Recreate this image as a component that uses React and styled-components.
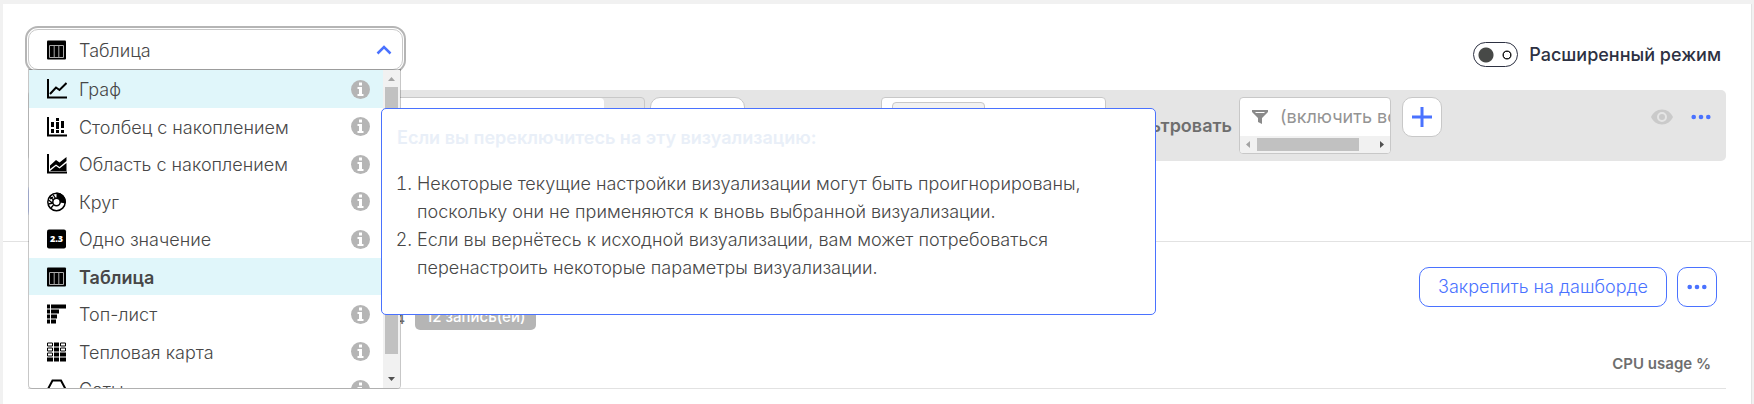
import React, { useState } from "react";
import styled, { createGlobalStyle } from "styled-components";

const GlobalStyle = createGlobalStyle`
  :root {
    --brand: #4a72ff;
    --text: #474747;
    --muted: #b5b5b5;
    --line: #e2e2e2;
  }

  * {
    box-sizing: border-box;
  }

  body {
    margin: 0;
    background: #f1f1f1;
    color: var(--text);
    font-family: Inter, "Noto Sans", sans-serif;
    font-size: 18px;
    font-weight: 300;
    line-height: 28px;
  }

  button,
  input {
    margin: 0;
    font: inherit;
    color: inherit;
  }

  button {
    cursor: pointer;
  }
`;

const Page = styled.main`
  min-height: 100vh;
  padding: 4px 2px 0 3px;
  overflow: hidden;
`;

const Panel = styled.div`
  min-height: 400px;
  background: #fff;
  border-right: 1px solid var(--line);
`;

const Editor = styled.section`
  height: 238px;
  padding: 25px 25px 0;
  border-bottom: 1px solid var(--line);
`;

const Header = styled.div`
  display: flex;
  justify-content: space-between;
  height: 61px;
`;

const Picker = styled.div`
  position: relative;
  width: 375px;
`;

const Trigger = styled.button`
  display: flex;
  align-items: center;
  gap: 12px;
  width: 100%;
  height: 41px;
  padding: 0 10px 0 18px;
  background: #fff;
  border: 1px solid #c8c8c8;
  border-radius: 10px;
  outline: 2px solid var(--muted);
  outline-offset: 1px;
  text-align: left;
`;

const Label = styled.span`
  flex: 1;
  padding-top: 2px;
  white-space: nowrap;
`;

const Menu = styled.div`
  position: absolute;
  z-index: 2;
  top: 40px;
  left: 0;
  display: flex;
  width: 373px;
  height: 320px;
  background: #fff;
  background-clip: padding-box;
  border: 1px solid rgba(0, 0, 0, 0.22);
  border-radius: 0 0 4px 4px;
  overflow: hidden;
`;

const Options = styled.ul`
  flex: 1;
  display: grid;
  grid-auto-rows: 38px 37px;
  margin: 0;
  padding: 0;
  list-style: none;
`;

const Option = styled.li`
  display: flex;
  align-items: center;
  gap: 12px;
  padding: 0 13px 0 18px;
  background: ${(props) => (props.$active ? "#e0f6fa" : "transparent")};
  font-weight: ${(props) => (props.$selected ? 600 : 300)};
`;

const Track = styled.div`
  display: flex;
  flex-direction: ${(props) => (props.$horizontal ? "row" : "column")};
  flex: 0 0 17px;
  align-items: center;
  background: #f1f1f1;
`;

const Thumb = styled.div`
  flex: 0 0 ${(props) => props.$size}px;
  align-self: stretch;
  margin: ${(props) => (props.$horizontal ? "2px 0" : "0 2px")};
  background: #c1c1c1;
`;

const Arrow = styled.svg`
  flex: 0 0 17px;
  width: 17px;
  height: 17px;
  fill: ${(props) => (props.$off ? "#a3a3a3" : "#505050")};

  &:last-child {
    margin-top: ${(props) => (props.$horizontal ? 0 : "auto")};
    margin-left: ${(props) => (props.$horizontal ? "auto" : 0)};
  }
`;

const Notice = styled.div`
  position: absolute;
  z-index: 3;
  top: 79px;
  left: 353px;
  width: 775px;
  height: 207px;
  padding: 15px;
  background: #fff;
  border: 1px solid var(--brand);
  border-radius: 5px;

  strong {
    display: block;
    color: #e9eff8;
    font-weight: 600;
  }

  ol {
    margin: 18px 0 0;
    padding: 0 0 0 20px;
  }

  li {
    max-width: 680px;
  }
`;

const Mode = styled.label`
  display: flex;
  align-items: center;
  align-self: flex-start;
  gap: 11px;
  height: 25px;
  margin: 13px 5px 0 0;
  color: #2d3142;
  font-weight: 500;
  cursor: pointer;
`;

const Switch = styled.input`
  appearance: none;
  width: 45px;
  height: 25px;
  border: 1px solid #2d3142;
  border-radius: 13px;
  background: radial-gradient(circle at 12px 12px, #474947 7px, transparent 8px),
    radial-gradient(
      circle at 33px 12px,
      transparent 3px,
      #222 3px,
      #222 4px,
      transparent 5px
    );
`;

const QueryBar = styled.div`
  display: flex;
  align-items: flex-start;
  height: 71px;
  padding: 7px 15px 7px 124px;
  background: #e5e5e5;
  border-radius: 5px;
`;

const Source = styled.div`
  display: flex;
  flex: 0 0 493px;
  height: 40px;
  margin-right: 5px;
  border: 1px solid #c8c8c8;
  border-radius: 4px;
  overflow: hidden;
`;

const SourceInput = styled.input`
  flex: 1;
  border: 0;
  border-radius: 4px;
  background: #fff;
`;

const SourceSide = styled.div`
  width: 40px;
`;

const Rounded = styled.button`
  display: flex;
  align-items: center;
  justify-content: center;
  flex: 0 0 ${(props) => props.$width || 40}px;
  height: 40px;
  padding: 0;
  background: #fff;
  border: 1px solid ${(props) => (props.$brand ? "var(--brand)" : "#c8c8c8")};
  border-radius: 10px;
  color: var(--brand);
`;

const Tags = styled.div`
  flex: 0 0 225px;
  height: 40px;
  margin-left: 136px;
  padding: 4px 10px;
  background: #fff;
  border: 1px solid #c8c8c8;
  border-radius: 4px;
`;

const Tag = styled.div`
  width: 93px;
  height: 30px;
  background: #f1f1f1;
  border: 1px solid #c8c8c8;
  border-radius: 4px;
`;

const FilterLabel = styled.label`
  flex: 0 0 133px;
  padding: 15px 7px 0 0;
  color: #6e6e6e;
  font-weight: 600;
  text-align: right;
`;

const Filter = styled.div`
  display: flex;
  flex-direction: column;
  flex: 0 0 152px;
  height: 57px;
  margin-right: 11px;
  background: #fff;
  border: 1px solid #c8c8c8;
  border-radius: 4px;
  overflow: hidden;
`;

const FilterField = styled.div`
  display: flex;
  align-items: center;
  flex: 1;
  gap: 12px;
  padding-left: 12px;
  color: #8a8a8a;
`;

const FilterInput = styled.input`
  flex: 1;
  min-width: 0;
  padding: 0;
  border: 0;
  background: none;
  font-weight: 400;

  &::placeholder {
    color: #949494;
    opacity: 1;
  }
`;

const BarActions = styled.div`
  display: flex;
  align-items: center;
  gap: 18px;
  height: 40px;
  margin-left: auto;
`;

const IconButton = styled.button`
  display: flex;
  padding: 0;
  border: 0;
  background: none;
  color: ${(props) => (props.$off ? "#cacaca" : "var(--brand)")};
`;

const AddQuery = styled(Rounded)`
  width: 130px;
  margin-top: 20px;
  border-color: #c8d4ff;
`;

const Results = styled.section`
  padding: 25px 25px 0;
`;

const Actions = styled.div`
  display: flex;
  justify-content: flex-end;
  gap: 10px;
  padding-right: 9px;
`;

const Summary = styled.div`
  display: flex;
  align-items: center;
  gap: 10px;
  height: 23px;
  color: #6e6e6e;
  font-size: 15px;
  font-weight: 500;
`;

const Count = styled.span`
  width: 377px;
  text-align: right;
`;

const Badge = styled.span`
  padding: 0 11px 3px;
  background: var(--muted);
  border-radius: 5px;
  color: #fff;
  line-height: 20px;
`;

const Table = styled.table`
  width: 100%;
  border-collapse: collapse;

  th {
    height: 58px;
    padding: 10px 15px 0 0;
    border-bottom: 1px solid var(--line);
    color: #6e6e6e;
    font-size: 15px;
    font-weight: 600;
    text-align: right;
  }
`;

const Glyph = ({ children }) => (
  <svg width="20" height="20" viewBox="0 0 20 20" aria-hidden="true">
    {children}
  </svg>
);

const Axes = () => (
  <path d="M1 0v18.500h19" fill="none" stroke="#000" strokeWidth="2" />
);

const GraphIcon = () => (
  <Glyph>
    <Axes />
    <path
      d="M3 15 9 8.500l3.500 2.500L19.500 4"
      fill="none"
      stroke="#000"
      strokeWidth="2"
    />
  </Glyph>
);

const BarsIcon = () => (
  <Glyph>
    <Axes />
    <path d="M4 5h3v5H4zM4 12h3v4H4zM9 1h3v3H9zM9 5h3v7H9zM9 13h3v3H9zM14 4h3v7h-3zM14 13h3v3h-3z" />
  </Glyph>
);

const AreaIcon = () => (
  <Glyph>
    <Axes />
    <path d="M3 11.500 9 6l3.500 2.500L19.500 3v4l-7 6L9 10.500 3 15zM3 17l6-5 3.500 2.500L19.500 9v8z" />
  </Glyph>
);

const PieIcon = () => (
  <Glyph>
    <circle cx="9.500" cy="10" r="8.700" fill="#fff" stroke="#000" strokeWidth="1.500" />
    <path d="M9.500.5a9.500 9.500 0 0 1 9.300 11L13 10.500a3.500 3.500 0 0 0-3.500-4z" />
    <circle cx="9.500" cy="10" r="3.700" fill="#fff" stroke="#000" strokeWidth="1.500" />
    <path
      d="M1.500 8l4 3M3 4.500l3.500 3.500M6 2.500l2.500 4M1.500 12l4.500-1M4 16l2.500-3M3 7l3-2"
      stroke="#000"
      strokeWidth="1.300"
    />
  </Glyph>
);

const ValueIcon = () => (
  <Glyph>
    <rect y="0.500" width="19" height="19" rx="2" />
    <text
      x="9.500"
      y="13"
      fill="#fff"
      fontFamily="Open Sans, sans-serif"
      fontSize="9"
      fontWeight="800"
      textAnchor="middle"
    >
      2.3
    </text>
  </Glyph>
);

const TableIcon = () => (
  <Glyph>
    <rect y="0.500" width="19" height="19" rx="1" />
    <path
      d="M2.500 5.500h14v12h-14zM7.200 5.500v12M11.800 5.500v12"
      fill="none"
      stroke="#aaa"
    />
  </Glyph>
);

const TopListIcon = () => (
  <Glyph>
    <path d="M0 .5h3v4H0zM4 .5h15v4H4zM0 5.500h3v4H0zM4 5.500h8v4H4zM0 10.500h3v4H0zM4 10.500h6v4H4zM0 15.500h3v4H0zM4 15.500h5v4H4z" />
  </Glyph>
);

const HeatIcon = () => (
  <Glyph>
    <path d="M7 .5h5v4H7zM7 5.500h5v4H7zM7 10.500h5v4H7zM13 10.500h6v4h-6zM0 15.500h6v4H0zM7 15.500h5v4H7zM13 15.500h6v4h-6z" />
    <path
      d="M.5 1h5v3h-5zM.5 6h5v3h-5zM.5 11h5v3h-5zM13.500 1h5v3h-5zM13.500 6h5v3h-5z"
      fill="#fff"
      stroke="#000"
    />
  </Glyph>
);

const HiveIcon = () => (
  <Glyph>
    <path
      d="M5.500 1.500h8.500l4.500 8.500-4.500 8.500H5.500L1 10z"
      fill="none"
      stroke="#000"
      strokeWidth="2"
    />
  </Glyph>
);

const InfoIcon = () => (
  <svg width="19" height="19" viewBox="0 0 19 19" aria-hidden="true">
    <circle cx="9.500" cy="9.500" r="9.500" fill="#b5b5b5" />
    <path
      d="M8 2.500h3v3H8zM6.500 7H11v7h1.500v2h-6v-2H8V9H6.500z"
      fill="#fff"
    />
  </svg>
);

const DotsIcon = () => (
  <svg width="20" height="6" viewBox="0 0 20 6" fill="currentColor">
    <circle cx="2.700" cy="3" r="2.300" />
    <circle cx="10" cy="3" r="2.300" />
    <circle cx="17.300" cy="3" r="2.300" />
  </svg>
);

const EyeIcon = () => (
  <svg width="22" height="16" viewBox="0 0 22 16" fill="currentColor">
    <path
      fillRule="evenodd"
      d="M11 .5C6 .5 2 3.500 0 8c2 4.500 6 7.500 11 7.500S20 12.500 22 8C20 3.500 16 .5 11 .5zM11 13a5 5 0 1 1 0-10 5 5 0 0 1 0 10z"
    />
    <circle cx="11" cy="8" r="3" />
  </svg>
);

const charts = [
  { name: "Граф", Icon: GraphIcon },
  { name: "Столбец с накоплением", Icon: BarsIcon },
  { name: "Область с накоплением", Icon: AreaIcon },
  { name: "Круг", Icon: PieIcon },
  { name: "Одно значение", Icon: ValueIcon },
  { name: "Таблица", Icon: TableIcon },
  { name: "Топ-лист", Icon: TopListIcon },
  { name: "Тепловая карта", Icon: HeatIcon },
  { name: "Соты", Icon: HiveIcon },
];

const VisualizationPicker = () => {
  const [selected, setSelected] = useState("Таблица");
  const [hovered, setHovered] = useState("Граф");
  const { Icon: SelectedIcon } = charts.find((c) => c.name === selected);

  return (
    <Picker>
      <Trigger type="button" aria-haspopup="listbox" aria-expanded="true">
        <SelectedIcon />
        <Label>{selected}</Label>
        <svg width="16" height="10" viewBox="0 0 16 10" aria-hidden="true">
          <path
            d="M1.500 8.500 8 2l6.500 6.500"
            fill="none"
            stroke="#4a72ff"
            strokeWidth="2.500"
          />
        </svg>
      </Trigger>
      <Menu>
        <Options role="listbox" aria-label="Визуализация">
          {charts.map(({ name, Icon }) => (
            <Option
              key={name}
              role="option"
              aria-selected={name === selected}
              $selected={name === selected}
              $active={name === selected || name === hovered}
              onMouseEnter={() => setHovered(name)}
              onClick={() => setSelected(name)}
            >
              <Icon />
              <Label>{name}</Label>
              {name !== selected && <InfoIcon />}
            </Option>
          ))}
        </Options>
        <Track>
          <Arrow $off viewBox="0 0 17 17">
            <path d="M5 11h7L8.500 7z" />
          </Arrow>
          <Thumb $size={267} />
          <Arrow viewBox="0 0 17 17">
            <path d="M5 6h7l-3.500 4z" />
          </Arrow>
        </Track>
      </Menu>
      <Notice role="tooltip">
        <strong>Если вы переключитесь на эту визуализацию:</strong>
        <ol>
          <li>
            Некоторые текущие настройки визуализации могут быть
            проигнорированы, поскольку они не применяются к вновь выбранной
            визуализации.
          </li>
          <li>
            Если вы вернётесь к исходной визуализации, вам может потребоваться
            перенастроить некоторые параметры визуализации.
          </li>
        </ol>
      </Notice>
    </Picker>
  );
};

const Query = () => (
  <QueryBar>
    <Source>
      <SourceInput aria-label="Метрика" />
      <SourceSide />
    </Source>
    <Rounded type="button" $width={95} aria-label="Агрегация" />
    <Tags>
      <Tag />
    </Tags>
    <FilterLabel htmlFor="filter">Фильтровать</FilterLabel>
    <Filter>
      <FilterField>
        <svg width="16" height="14" viewBox="0 0 16 14" aria-hidden="true">
          <path
            fill="currentColor"
            fillRule="evenodd"
            d="M0 0h16v2l-6 6v6L6 12V8L0 2zM3 2l1 1h8l1-1z"
          />
        </svg>
        <FilterInput id="filter" placeholder="(включить все)" />
      </FilterField>
      <Track $horizontal>
        <Arrow $off $horizontal viewBox="0 0 17 17">
          <path d="M10 5v7L6 8.500z" />
        </Arrow>
        <Thumb $size={102} $horizontal />
        <Arrow $horizontal viewBox="0 0 17 17">
          <path d="M7 5v7l4-3.500z" />
        </Arrow>
      </Track>
    </Filter>
    <Rounded type="button" aria-label="Добавить">
      <svg width="20" height="20" viewBox="0 0 20 20">
        <path d="M10 0v20M0 10h20" stroke="currentColor" strokeWidth="3" />
      </svg>
    </Rounded>
    <BarActions>
      <IconButton type="button" $off aria-label="Скрыть">
        <EyeIcon />
      </IconButton>
      <IconButton type="button" aria-label="Ещё">
        <DotsIcon />
      </IconButton>
    </BarActions>
  </QueryBar>
);

const App = () => (
  <>
    <GlobalStyle />
    <Page>
      <Panel>
        <Editor>
          <Header>
            <VisualizationPicker />
            <Mode>
              <Switch type="checkbox" role="switch" />
              Расширенный режим
            </Mode>
          </Header>
          <Query />
          <AddQuery type="button" $brand aria-label="Добавить запрос" />
        </Editor>
        <Results>
          <Actions>
            <Rounded type="button" $brand $width={248}>
              Закрепить на дашборде
            </Rounded>
            <Rounded type="button" $brand aria-label="Ещё">
              <DotsIcon />
            </Rounded>
          </Actions>
          <Summary>
            <Count>4</Count>
            <Badge>12 запись(ей)</Badge>
          </Summary>
          <Table>
            <thead>
              <tr>
                <th scope="col">CPU usage %</th>
              </tr>
            </thead>
          </Table>
        </Results>
      </Panel>
    </Page>
  </>
);

export default App;
